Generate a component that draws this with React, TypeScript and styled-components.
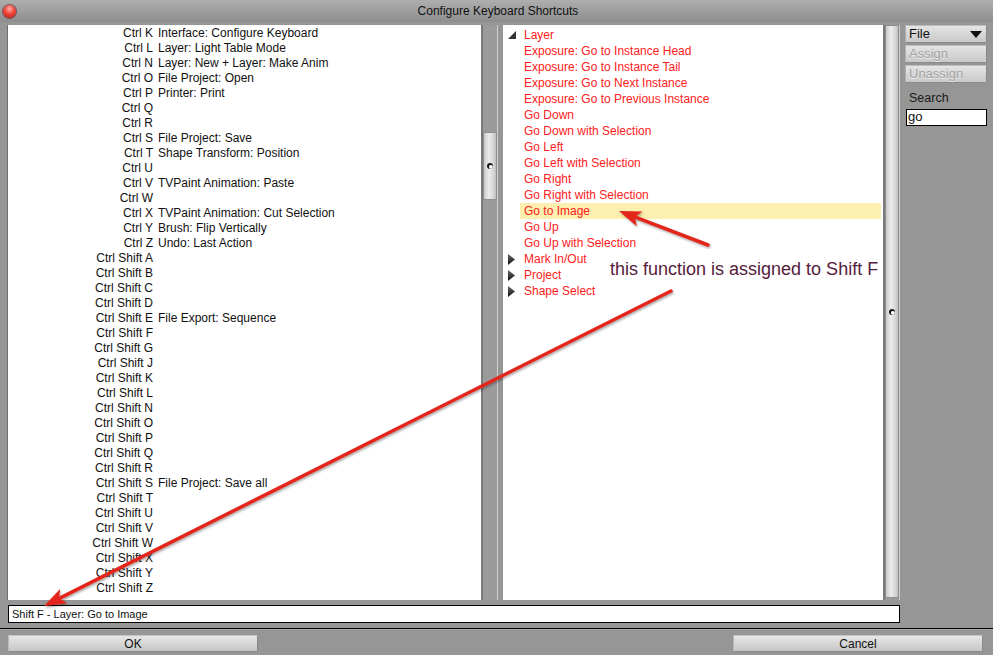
import React from "react";
import styled, { createGlobalStyle } from "styled-components";

const GlobalStyle = createGlobalStyle`
  html, body { margin: 0; padding: 0; background: #969696; }
  body { font-family: "Liberation Sans", Arial, Helvetica, sans-serif; }
  * { box-sizing: border-box; }
`;

const Window = styled.div`
  position: relative;
  width: 993px;
  height: 655px;
  background: #969696;
  display: flex;
  flex-direction: column;
  overflow: hidden;
`;

const TitleBar = styled.div`
  height: 22px;
  display: grid;
  grid-template-columns: 1fr auto 1fr;
  align-items: center;
  background: linear-gradient(#aeaeae, #8d8d8d);
  padding-left: 3px;
`;

const CloseDot = styled.div`
  width: 13px;
  height: 13px;
  border-radius: 50%;
  background: radial-gradient(circle at 50% 30%, #ffb0a8 0%, #f0453a 45%, #b3120e 100%);
  box-shadow: 0 0 0 1px rgba(90, 20, 20, 0.55);
`;

const Title = styled.div`
  font-size: 12px;
  color: #111;
  padding-bottom: 1px;
`;

const Body = styled.div`
  display: flex;
  padding: 3px 6px 0 7px;
  gap: 5px;
`;

const Main = styled.div`
  width: 893px;
  display: flex;
  flex-direction: column;
  gap: 5px;
`;

const Panes = styled.div`
  display: flex;
  height: 575px;
  gap: 5px;
`;

const Pane = styled.div<{ $w: number; $edge?: boolean }>`
  width: ${(p) => p.$w}px;
  display: flex;
  border-left: ${(p) => (p.$edge ? "1px solid #6e6e6e" : "none")};
`;

const ListBox = styled.div`
  flex: 1;
  background: #fff;
  overflow: hidden;
`;

const Track = styled.div`
  width: 17px;
  background: #9b9b9b;
  border-left: 2px solid #7a7a7a;
  border-right: 1px solid #cfcfcf;
  display: flex;
  flex-direction: column;
`;

const Thumb = styled.div<{ $top: number; $h?: number }>`
  margin-top: ${(p) => p.$top}px;
  height: ${(p) => (p.$h ? `${p.$h}px` : "auto")};
  flex: ${(p) => (p.$h ? "none" : "1")};
  margin-bottom: ${(p) => (p.$h ? 0 : 2)}px;
  background: linear-gradient(90deg, #c9c9c9, #ececec 40%, #d4d4d4 80%, #bdbdbd);
  border: 1px solid #8e8e8e;
  display: flex;
  align-items: center;
  justify-content: center;
`;

const Grip = styled.div`
  width: 6px;
  height: 6px;
  border-radius: 50%;
  background: radial-gradient(circle at 65% 65%, #fff 0 25%, #111 45%, #333 100%);
`;

const KeyList = styled.div`
  padding-top: 1px;
  display: grid;
  grid-template-columns: 145px 1fr;
  column-gap: 5px;
  grid-auto-rows: 15px;
  font-size: 12px;
  line-height: 15px;
  color: #111;
`;

const KeyCell = styled.div`
  text-align: right;
  white-space: nowrap;
`;

const ActionCell = styled.div`
  white-space: nowrap;
`;

const Tree = styled.div`
  padding-top: 2px;
  padding-right: 2px;
  display: flex;
  flex-direction: column;
  font-size: 12px;
  color: #ff2020;
`;

const TreeRow = styled.div<{ $selected?: boolean }>`
  height: 16px;
  line-height: 16px;
  display: flex;
  align-items: center;
  white-space: nowrap;
  margin-left: 17px;
  padding-left: 4px;
  background: ${(p) => (p.$selected ? "#fdefb0" : "transparent")};
`;

const Toggle = styled.span`
  width: 21px;
  margin-left: -21px;
  padding-left: 5px;
  display: inline-flex;
  align-items: center;
`;

const Status = styled.div`
  height: 18px;
  margin-left: 1px;
  background: #fff;
  border: 1px solid #000;
  font-size: 11px;
  line-height: 16px;
  padding-left: 3px;
  color: #111;
`;

const Side = styled.div`
  width: 82px;
  display: flex;
  flex-direction: column;
  gap: 2px;
`;

const Btn = styled.div<{ $disabled?: boolean }>`
  height: 18px;
  display: flex;
  align-items: center;
  justify-content: space-between;
  padding: 0 4px 0 3px;
  font-size: 13px;
  line-height: 16px;
  overflow: visible;
  white-space: nowrap;
  background: linear-gradient(#e4e4e4, #c9c9c9);
  border: 1px solid #8a8a8a;
  border-top-color: #bdbdbd;
  border-left-color: #b0b0b0;
  color: ${(p) => (p.$disabled ? "#a3a3a3" : "#111")};
  text-shadow: ${(p) => (p.$disabled ? "0 1px 0 #ededed" : "none")};
`;

const SearchLabel = styled.div`
  font-size: 12.5px;
  line-height: 15px;
  color: #1a1a1a;
  margin-top: 6px;
  padding-left: 4px;
`;

const SearchInput = styled.div`
  height: 17px;
  margin: 1px 0 0 1px;
  background: #fff;
  border: 1px solid #000;
  font-size: 13px;
  line-height: 14px;
  padding-left: 1px;
  color: #111;
`;

const Separator = styled.div`
  margin-top: 5px;
  height: 2px;
  border-top: 1px solid #000;
  border-bottom: 1px solid #a8a8a8;
`;

const Footer = styled.div`
  display: flex;
  justify-content: space-between;
  padding: 5px 10px 0 8px;
`;

const FootBtn = styled.div`
  width: 250px;
  height: 17px;
  display: flex;
  align-items: center;
  justify-content: center;
  font-size: 12px;
  color: #111;
  background: linear-gradient(#e6e6e6, #c6c6c6);
  border: 1px solid #8a8a8a;
  border-top-color: #c4c4c4;
  border-left-color: #b8b8b8;
`;

const Overlay = styled.svg`
  position: absolute;
  left: 0;
  top: 0;
  pointer-events: none;
`;

const Note = styled.div`
  position: absolute;
  left: 610px;
  top: 259px;
  font-size: 18px;
  color: #56203c;
  white-space: nowrap;
`;

const keys: [string, string][] = [
  ["Ctrl K", "Interface: Configure Keyboard"],
  ["Ctrl L", "Layer: Light Table Mode"],
  ["Ctrl N", "Layer: New + Layer: Make Anim"],
  ["Ctrl O", "File Project: Open"],
  ["Ctrl P", "Printer: Print"],
  ["Ctrl Q", ""],
  ["Ctrl R", ""],
  ["Ctrl S", "File Project: Save"],
  ["Ctrl T", "Shape Transform: Position"],
  ["Ctrl U", ""],
  ["Ctrl V", "TVPaint Animation: Paste"],
  ["Ctrl W", ""],
  ["Ctrl X", "TVPaint Animation: Cut Selection"],
  ["Ctrl Y", "Brush: Flip Vertically"],
  ["Ctrl Z", "Undo: Last Action"],
  ["Ctrl Shift A", ""],
  ["Ctrl Shift B", ""],
  ["Ctrl Shift C", ""],
  ["Ctrl Shift D", ""],
  ["Ctrl Shift E", "File Export: Sequence"],
  ["Ctrl Shift F", ""],
  ["Ctrl Shift G", ""],
  ["Ctrl Shift J", ""],
  ["Ctrl Shift K", ""],
  ["Ctrl Shift L", ""],
  ["Ctrl Shift N", ""],
  ["Ctrl Shift O", ""],
  ["Ctrl Shift P", ""],
  ["Ctrl Shift Q", ""],
  ["Ctrl Shift R", ""],
  ["Ctrl Shift S", "File Project: Save all"],
  ["Ctrl Shift T", ""],
  ["Ctrl Shift U", ""],
  ["Ctrl Shift V", ""],
  ["Ctrl Shift W", ""],
  ["Ctrl Shift X", ""],
  ["Ctrl Shift Y", ""],
  ["Ctrl Shift Z", ""],
];

const layerChildren = [
  "Exposure: Go to Instance Head",
  "Exposure: Go to Instance Tail",
  "Exposure: Go to Next Instance",
  "Exposure: Go to Previous Instance",
  "Go Down",
  "Go Down with Selection",
  "Go Left",
  "Go Left with Selection",
  "Go Right",
  "Go Right with Selection",
  "Go to Image",
  "Go Up",
  "Go Up with Selection",
];

const collapsed = ["Mark In/Out", "Project", "Shape Select"];

const Expanded = () => (
  <svg width="8" height="8" viewBox="0 0 8 8">
    <polygon points="0,8 8,8 8,0" fill="#333" />
  </svg>
);

const Collapsed = () => (
  <svg width="7" height="11" viewBox="0 0 7 11">
    <defs>
      <linearGradient id="tg" x1="0" y1="0" x2="0" y2="1">
        <stop offset="0" stopColor="#666" />
        <stop offset="1" stopColor="#111" />
      </linearGradient>
    </defs>
    <polygon points="0,0 7,5.5 0,11" fill="url(#tg)" />
  </svg>
);

const Arrow = ({ x1, y1, x2, y2 }: { x1: number; y1: number; x2: number; y2: number }) => {
  const dx = x2 - x1;
  const dy = y2 - y1;
  const len = Math.hypot(dx, dy);
  const ux = dx / len;
  const uy = dy / len;
  const hl = 22;
  const hw = 8;
  const bx = x2 - ux * hl;
  const by = y2 - uy * hl;
  const px = -uy;
  const py = ux;
  const head = `${x2},${y2} ${bx + px * hw},${by + py * hw} ${bx + ux * 5},${by + uy * 5} ${bx - px * hw},${by - py * hw}`;
  return (
    <g filter="url(#shadow)">
      <line x1={x1} y1={y1} x2={bx + ux * 6} y2={by + uy * 6} stroke="#e2261b" strokeWidth="3.5" strokeLinecap="round" />
      <polygon points={head} fill="#e2261b" />
    </g>
  );
};

export default function App() {
  return (
    <>
      <GlobalStyle />
      <Window>
        <TitleBar>
          <CloseDot />
          <Title>Configure Keyboard Shortcuts</Title>
          <span />
        </TitleBar>
        <Body>
          <Main>
            <Panes>
              <Pane $w={491} $edge>
                <ListBox>
                  <KeyList>
                    {keys.map(([k, a]) => (
                      <React.Fragment key={k}>
                        <KeyCell>{k}</KeyCell>
                        <ActionCell>{a}</ActionCell>
                      </React.Fragment>
                    ))}
                  </KeyList>
                </ListBox>
                <Track>
                  <Thumb $top={107} $h={68}>
                    <Grip />
                  </Thumb>
                </Track>
              </Pane>
              <Pane $w={397}>
                <ListBox>
                  <Tree>
                    <TreeRow>
                      <Toggle>
                        <Expanded />
                      </Toggle>
                      Layer
                    </TreeRow>
                    {layerChildren.map((c) => (
                      <TreeRow key={c} $selected={c === "Go to Image"}>
                        {c}
                      </TreeRow>
                    ))}
                    {collapsed.map((c) => (
                      <TreeRow key={c}>
                        <Toggle>
                          <Collapsed />
                        </Toggle>
                        {c}
                      </TreeRow>
                    ))}
                  </Tree>
                </ListBox>
                <Track>
                  <Thumb $top={0}>
                    <Grip />
                  </Thumb>
                </Track>
              </Pane>
            </Panes>
            <Status>Shift F - Layer: Go to Image</Status>
          </Main>
          <Side>
            <Btn>
              File
              <svg width="12" height="7" viewBox="0 0 12 7">
                <polygon points="0,0 12,0 6,7" fill="#111" />
              </svg>
            </Btn>
            <Btn $disabled>Assign</Btn>
            <Btn $disabled>Unassign</Btn>
            <SearchLabel>Search</SearchLabel>
            <SearchInput>go</SearchInput>
          </Side>
        </Body>
        <Separator />
        <Footer>
          <FootBtn>OK</FootBtn>
          <FootBtn>Cancel</FootBtn>
        </Footer>
        <Note>this function is assigned to Shift F</Note>
        <Overlay width="993" height="655" viewBox="0 0 993 655">
          <defs>
            <filter id="shadow" x="-10%" y="-10%" width="120%" height="120%">
              <feDropShadow dx="1" dy="1.5" stdDeviation="1.2" floodColor="#000" floodOpacity="0.35" />
            </filter>
          </defs>
          <Arrow x1={708} y1={245} x2={619} y2={211} />
          <Arrow x1={671} y1={291} x2={44} y2={606} />
        </Overlay>
      </Window>
    </>
  );
}
